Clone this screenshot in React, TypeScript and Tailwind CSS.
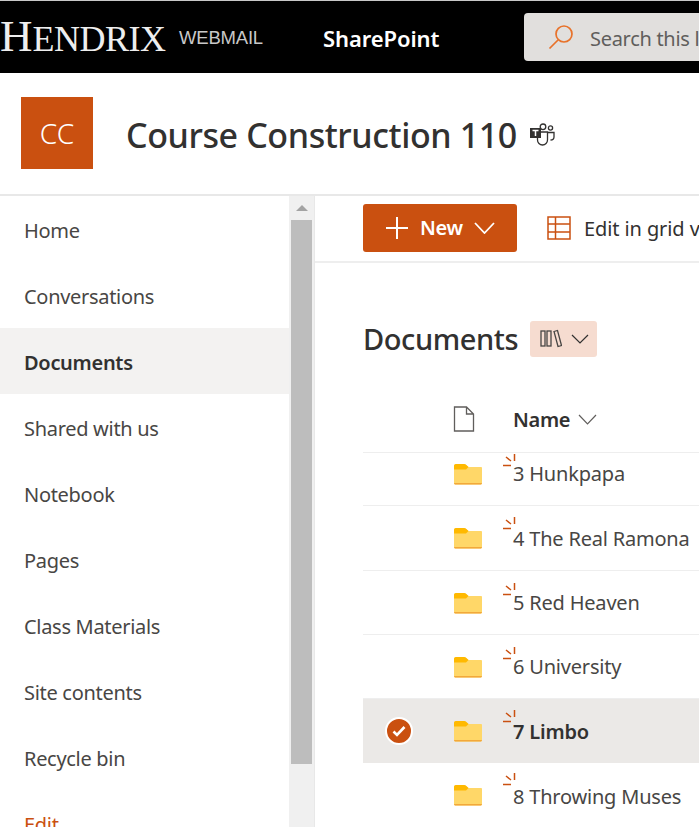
import React from 'react';

const navItems = ['Home', 'Conversations', 'Documents', 'Shared with us', 'Notebook', 'Pages', 'Class Materials', 'Site contents', 'Recycle bin'];

// first row is scrolled under the header, so it is shorter
const rows = [
  { name: '3 Hunkpapa', h: 'h-[53px] pb-[11px]', nudge: '' },
  { name: '4 The Real Ramona', h: 'h-[65px]', nudge: 'pt-[2px]' },
  { name: '5 Red Heaven', h: 'h-[64px]', nudge: '' },
  { name: '6 University', h: 'h-[64px]', nudge: '' },
  { name: '7 Limbo', h: 'h-[64px]', nudge: 'pt-[2px]', selected: true },
  { name: '8 Throwing Muses', h: 'h-[65px]', nudge: 'pt-[4px]' },
];

const Chevron = ({ w, h, stroke = 1.2, className = '' }: { w: number; h: number; stroke?: number; className?: string }) => (
  <svg width={w} height={h} viewBox={`0 0 ${w} ${h}`} fill="none" stroke="currentColor" strokeWidth={stroke} className={`shrink-0 ${className}`}>
    <path d={`M1 1L${w / 2} ${h - 1}L${w - 1} 1`} />
  </svg>
);

const FolderIcon = () => (
  <svg width="30" height="24" viewBox="0 0 30 24" className="shrink-0">
    <path d="M1 4.500C1 3.100 1.800 2 3 2h8c.8 0 1.400.3 2 .8L15.500 5H28c.6 0 1 .5 1 1.100V21c0 .8-.6 1.500-1.500 1.500h-25C1.600 22.500 1 21.800 1 21z" fill="#ffd768" />
    <path d="M1 4c0-1.200.8-2 2-2h8c.8 0 1.400.3 2 .8L15.500 5 13 7.500H1z" fill="#ffb900" />
    <path d="M1 21h28c0 .9-.6 1.500-1.500 1.500h-25C1.600 22.500 1 21.900 1 21z" fill="#f2a83b" />
  </svg>
);

const NewBurst = () => (
  <svg width="13" height="13" viewBox="0 0 13 13" className="absolute left-[-10px] top-[-5px]">
    <path d="M11.500 0V7M3 3L8 7M0 11.500H8" stroke="#ca5010" strokeWidth="1.500" fill="none" />
  </svg>
);

const TeamsIcon = () => (
  <svg width="26" height="24" viewBox="0 0 26 24" fill="none" stroke="#323130" strokeWidth="1.300">
    <circle cx="14" cy="3.800" r="2.800" />
    <circle cx="21.500" cy="5" r="2.100" />
    <path d="M19 9.500h6v4.500c0 1.800-1.400 3-3.500 3" />
    <path d="M8.500 9h10v8a5 5 0 0 1-10 0z" />
    <rect x="1" y="5" width="11" height="10" fill="#323130" stroke="none" />
    <path d="M3.500 7.500h6M6.500 7.500v5.500" stroke="#fff" strokeWidth="1.500" />
  </svg>
);

export default function App() {
  return (
    <div className="w-[699px] h-[827px] overflow-hidden bg-white text-[#323130] font-['Noto_Sans','Open_Sans',sans-serif]">
      {/* top bar */}
      <div className="h-[73px] bg-black border-t border-[#c8c8c8] flex items-center">
        <div className="w-[179px] leading-none text-[#eeeeee] font-['Liberation_Serif',serif] whitespace-nowrap pb-[1px]">
          <span className="text-[45px]">H</span>
          <span className="text-[36px] tracking-[-0.5px]">ENDRIX</span>
        </div>
        <div className="w-[144px] pt-[2px] text-[18.500px] text-[#c8c8c8] font-['Liberation_Sans',sans-serif] tracking-[-0.2px]">WEBMAIL</div>
        <div className="w-[201px] pt-[3px] text-[22px] font-semibold text-white tracking-[-0.1px]">SharePoint</div>
        <div className="flex-1 h-[48px] bg-[#e1dfdd] rounded-l-[4px] flex items-center overflow-hidden whitespace-nowrap">
          <svg width="26" height="26" viewBox="0 0 26 26" fill="none" stroke="#e8722a" strokeWidth="1.700" className="ml-[24px] shrink-0">
            <circle cx="16" cy="10" r="8" />
            <path d="M10 16L1.500 24.500" />
          </svg>
          <span className="ml-[16px] pt-[3px] text-[20px] text-[#605e5c] tracking-[-0.3px]">Search this library</span>
        </div>
      </div>

      {/* site header */}
      <div className="h-[123px] border-b-2 border-[#e8e8e8] flex items-center pl-[21px] pb-[1px]">
        <div className="w-[72px] h-[72px] bg-[#ca5010] text-white text-[28px] font-light flex items-center justify-center">CC</div>
        <div className="ml-[33px] pt-[4px] text-[34px] font-medium tracking-[-0.4px] whitespace-nowrap">Course Construction 110</div>
        <div className="ml-[12px] pt-[3px]"><TeamsIcon /></div>
      </div>

      <div className="flex h-[631px]">
        {/* left nav */}
        <div className="w-[289px] shrink-0">
          {navItems.map((item) => (
            <div
              key={item}
              className={`h-[66px] flex items-center pl-[24px] pt-[4px] text-[20px] tracking-[-0.3px] ${item === 'Documents' ? 'bg-[#f3f2f1] font-semibold' : 'text-[#484644]'}`}
            >
              {item}
            </div>
          ))}
          <div className="h-[66px] flex items-center pl-[24px] pt-[4px] text-[20px] tracking-[-0.3px] text-[#ca5010]">Edit</div>
        </div>

        {/* scrollbar */}
        <div className="w-[26px] shrink-0 bg-[#f0f0f0] border-r border-[#e8e8e8] flex flex-col items-center">
          <div className="h-[24px] flex items-center justify-center">
            <div className="w-0 h-0 border-x-[6px] border-x-transparent border-b-[6px] border-b-[#a3a3a3]" />
          </div>
          <div className="w-[21px] h-[544px] bg-[#bdbdbd] mr-[1px]" />
        </div>

        {/* main */}
        <div className="flex-1 min-w-0">
          <div className="h-[67px] border-b-2 border-[#eeeeee] flex items-center pl-[48px] pb-[1px] whitespace-nowrap">
            <div className="w-[154px] h-[48px] bg-[#ca5010] rounded-[3px] text-white flex items-center shrink-0">
              <svg width="24" height="24" viewBox="0 0 24 24" fill="none" stroke="currentColor" strokeWidth="2" className="ml-[22px] shrink-0">
                <path d="M12 1V23M1 12H23" />
              </svg>
              <span className="ml-[11px] text-[20px] font-semibold tracking-[-0.3px]">New</span>
              <Chevron w={21} h={12} stroke={1.800} className="ml-[11px]" />
            </div>
            <svg width="24" height="24" viewBox="0 0 24 24" fill="none" stroke="#ca5010" strokeWidth="1.500" className="ml-[30px] shrink-0">
              <rect x="1" y="1" width="22" height="22" />
              <path d="M1 8h22M1 16h22M8.500 1v22" />
            </svg>
            <span className="ml-[13px] pt-[2px] text-[20px] tracking-[-0.1px]">Edit in grid view</span>
          </div>

          <div className="pl-[48px] h-[123px] pt-[58px] flex items-start">
            <div className="text-[29px] leading-[36px] font-medium tracking-[-0.4px]">Documents</div>
            <div className="ml-[12px] w-[67px] h-[36px] bg-[#f6dcd0] rounded-[3px] flex items-center pl-[10px] shrink-0">
              <svg width="22" height="20" viewBox="0 0 22 20" fill="none" stroke="#484644" strokeWidth="1.300">
                <rect x="1" y="2" width="4" height="15" />
                <rect x="7" y="2" width="4" height="15" />
                <path d="M14 2.500l3.500-1 4 15-3.500 1z" />
              </svg>
              <Chevron w={18} h={10} className="ml-[9px]" />
            </div>
          </div>

          <div className="ml-[48px]">
            <div className="h-[67px] border-b border-[#eeeeee] flex items-center">
              <svg width="22" height="26" viewBox="0 0 22 26" fill="none" stroke="#605e5c" strokeWidth="1.300" className="ml-[90px] shrink-0">
                <path d="M1.500 1h12l7 7v17h-19zM13.500 1v7h7" />
              </svg>
              <span className="ml-[38px] pt-[2px] text-[20px] font-semibold tracking-[-0.3px]">Name</span>
              <Chevron w={19} h={11} className="ml-[8px] text-[#605e5c]" />
            </div>
            {rows.map((row) => (
              <div
                key={row.name}
                className={`${row.h} flex items-center whitespace-nowrap ${row.selected ? 'bg-[#ebe9e7]' : 'border-b border-[#eeeeee]'}`}
              >
                <div className="w-[90px] shrink-0 flex items-center">
                  {row.selected && (
                    <div className="ml-[22px] w-[28px] h-[28px] rounded-full bg-[#ca5010] border-2 border-white flex items-center justify-center">
                      <svg width="14" height="12" viewBox="0 0 14 12" fill="none" stroke="#fff" strokeWidth="2.600">
                        <path d="M1.500 6.500L5 10l7.500-8" />
                      </svg>
                    </div>
                  )}
                </div>
                <FolderIcon />
                <div className={`relative ml-[30px] text-[20px] tracking-[-0.2px] ${row.nudge}`}>
                  <NewBurst />
                  <span className={row.selected ? 'font-semibold' : 'text-[#484644]'}>{row.name}</span>
                </div>
              </div>
            ))}
          </div>
        </div>
      </div>
    </div>
  );
}
